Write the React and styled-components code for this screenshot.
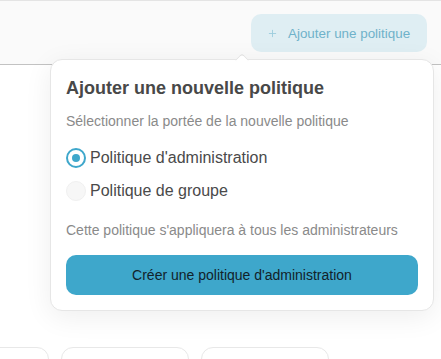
import React from "react"
import styled, { createGlobalStyle } from "styled-components"
import { Plus } from "lucide-react"

const Global = createGlobalStyle`
  html, body {
    margin: 0;
    padding: 0;
    background: #fff;
    font-family: "Liberation Sans", Arial, sans-serif;
    overflow: hidden;
  }
`

const Page = styled.div`
  position: relative;
  width: 441px;
  height: 359px;
  overflow: hidden;
`

const Header = styled.header`
  height: 63px;
  background: #fafafa;
  border-top: 1px solid #e4e4e4;
  border-bottom: 1px solid #c2c2c2;
  display: flex;
  align-items: center;
  justify-content: flex-end;
  padding-right: 14px;
  box-sizing: content-box;
`

const AddButton = styled.button`
  display: flex;
  align-items: center;
  gap: 10px;
  height: 38px;
  width: 176px;
  padding: 0 0 0 16px;
  margin-top: 1px;
  border: none;
  border-radius: 10px;
  background: #dfeef3;
  color: #6fb2ca;
  font-family: inherit;
  font-size: 13.4px;
  white-space: nowrap;
  box-sizing: border-box;
`

const Main = styled.main`
  padding-top: 282px;
`

const CardRow = styled.div`
  display: flex;
  gap: 12px;
  margin-left: -79px;
`

const Card = styled.div`
  width: 128px;
  height: 60px;
  flex: none;
  border: 1px solid #e8e8e8;
  border-radius: 12px;
  box-sizing: border-box;
  background: #fff;
`

const Popover = styled.div`
  position: absolute;
  left: 50px;
  top: 59px;
  width: 384px;
  height: 252px;
  box-sizing: border-box;
  padding: 18px 15px 15px;
  background: #fff;
  border: 1px solid #e6e6e6;
  border-radius: 12px;
  box-shadow: 0 6px 28px rgba(0, 0, 0, 0.07);
  display: flex;
  flex-direction: column;
`

const Arrow = styled.div`
  position: absolute;
  top: -5px;
  left: 186px;
  width: 9px;
  height: 9px;
  background: #fff;
  border-left: 1px solid #e0e0e0;
  border-top: 1px solid #e0e0e0;
  border-top-left-radius: 4px;
  transform: rotate(45deg);
`

const Title = styled.h2`
  margin: 0;
  font-size: 18px;
  line-height: 21px;
  font-weight: 700;
  color: #484848;
`

const Hint = styled.p`
  margin: ${p => p.$top}px 0 0;
  font-size: 14px;
  line-height: 20px;
  color: #8a8a8a;
`

const Options = styled.div`
  display: flex;
  flex-direction: column;
  gap: 13px;
  margin-top: 17px;
`

const Option = styled.label`
  display: flex;
  align-items: center;
  gap: 4px;
  height: 20px;
  font-size: 16px;
  color: #4a4a4a;
`

const Radio = styled.span`
  width: 20px;
  height: 20px;
  box-sizing: border-box;
  border-radius: 50%;
  display: flex;
  align-items: center;
  justify-content: center;
  border: ${p => (p.$checked ? "2px solid #3ea7cb" : "1px solid #f0f0f0")};
  background: ${p => (p.$checked ? "#fff" : "#f7f7f7")};

  &::after {
    content: "";
    display: ${p => (p.$checked ? "block" : "none")};
    width: 8px;
    height: 8px;
    border-radius: 50%;
    background: #3ea7cb;
  }
`

const Submit = styled.button`
  margin-top: 15px;
  height: 40px;
  width: 100%;
  border: none;
  border-radius: 10px;
  background: #3ea7cb;
  color: #12222a;
  font-family: inherit;
  font-size: 14px;
`

export default function App() {
  return (
    <Page>
      <Global />
      <Header>
        <AddButton>
          <Plus size={11} strokeWidth={2} color="#9ccddd" />
          Ajouter une politique
        </AddButton>
      </Header>
      <Main>
        <CardRow>
          <Card />
          <Card />
          <Card />
        </CardRow>
      </Main>
      <Popover>
        <Arrow />
        <Title>Ajouter une nouvelle politique</Title>
        <Hint $top={12}>Sélectionner la portée de la nouvelle politique</Hint>
        <Options>
          <Option>
            <Radio $checked />
            Politique d'administration
          </Option>
          <Option>
            <Radio />
            Politique de groupe
          </Option>
        </Options>
        <Hint $top={19}>Cette politique s'appliquera à tous les administrateurs</Hint>
        <Submit>Créer une politique d'administration</Submit>
      </Popover>
    </Page>
  )
}
